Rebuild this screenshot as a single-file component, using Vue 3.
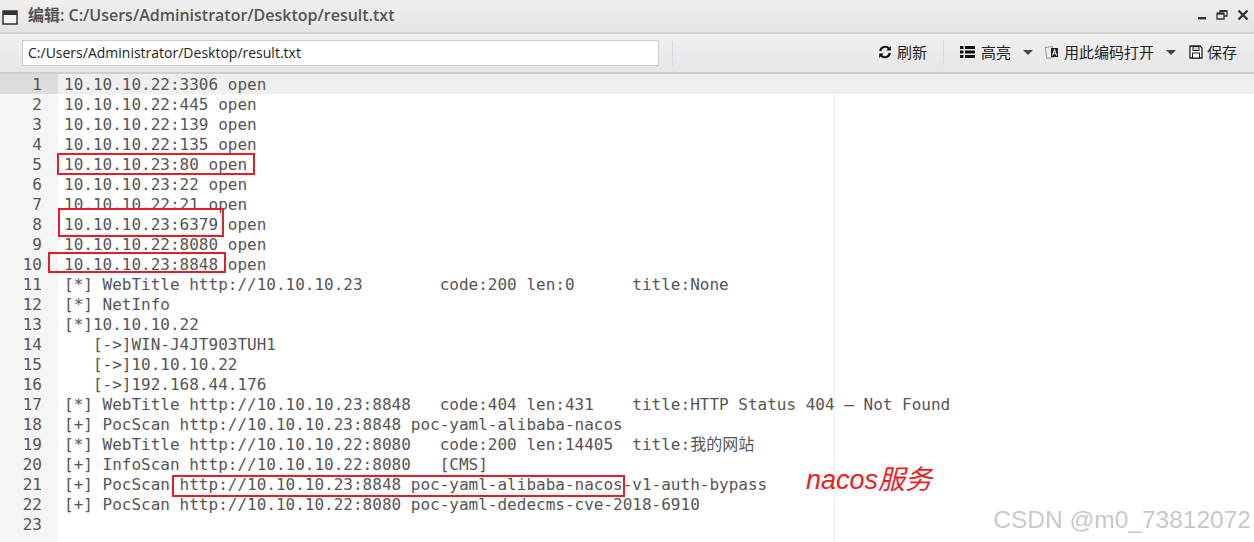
<script setup>
const lines = [
  '10.10.10.22:3306 open','10.10.10.22:445 open','10.10.10.22:139 open','10.10.10.22:135 open',
  '10.10.10.23:80 open','10.10.10.23:22 open','10.10.10.22:21 open','10.10.10.23:6379 open',
  '10.10.10.22:8080 open','10.10.10.23:8848 open',
  '[*] WebTitle http://10.10.10.23        code:200 len:0      title:None',
  '[*] NetInfo','[*]10.10.10.22','   [->]WIN-J4JT903TUH1','   [->]10.10.10.22','   [->]192.168.44.176',
  '[*] WebTitle http://10.10.10.23:8848   code:404 len:431    title:HTTP Status 404 – Not Found',
  '[+] PocScan http://10.10.10.23:8848 poc-yaml-alibaba-nacos',
  '[*] WebTitle http://10.10.10.22:8080   code:200 len:14405  title:我的网站',
  '[+] InfoScan http://10.10.10.22:8080   [CMS]',
  '[+] PocScan http://10.10.10.23:8848 poc-yaml-alibaba-nacos-v1-auth-bypass',
  '[+] PocScan http://10.10.10.22:8080 poc-yaml-dedecms-cve-2018-6910',
  ''
]
const boxes = [
  { left: 57, top: 153, width: 198, height: 22 },
  { left: 58, top: 208, width: 166, height: 29 },
  { left: 48, top: 252, width: 178, height: 21 },
  { left: 172, top: 475, width: 453, height: 22 }
]
const boxStyle = b => ({ left: b.left + 'px', top: b.top + 'px', width: b.width + 'px', height: b.height + 'px' })
</script>

<template>
  <div class="win">
    <header class="titlebar">
      <svg class="winicon" width="16" height="15" viewBox="0 0 16 15"><rect x="1" y="1" width="14" height="13" fill="#f4f4f4" stroke="#333" stroke-width="1.500"/><rect x="1" y="1" width="14" height="4" fill="#333"/></svg>
      <span class="title">编辑: C:/Users/Administrator/Desktop/result.txt</span>
      <div class="winbtns">
        <svg width="10" height="12" viewBox="0 0 10 12"><rect x="1" y="8" width="8" height="2.400" fill="#333"/></svg>
        <svg width="12" height="10" viewBox="0 0 12 10"><path d="M4 3V1h7v5H8.500M1 3.500h7v5.500H1z" fill="none" stroke="#333" stroke-width="1.300"/><path d="M1 3.500h7M4 1h7" stroke="#333" stroke-width="2"/></svg>
        <svg width="12" height="12" viewBox="0 0 12 12"><path d="M1.500 1.500l9 9M10.500 1.500l-9 9" stroke="#333" stroke-width="2.400"/></svg>
      </div>
    </header>
    <div class="toolbar">
      <div class="path">C:/Users/Administrator/Desktop/result.txt</div>
      <div class="vsep first"></div>
      <div class="tools">
        <span class="tool refresh">
          <svg width="14" height="14" viewBox="0 0 14 14"><path d="M2.200 6A5 5 0 0 1 11 3.600M11.800 8A5 5 0 0 1 3 10.400" fill="none" stroke="#111" stroke-width="2.200"/><path d="M12.800 1v4.500H8.300zM1.200 13V8.500h4.500z" fill="#111"/></svg>
          <span class="lbl">刷新</span>
        </span>
        <div class="vsep"></div>
        <span class="tool hl">
          <svg width="15" height="12" viewBox="0 0 15 12"><path d="M0 0h3.500v3H0zM5 0h10v3H5zM0 4.500h3.500v3H0zM5 4.500h10v3H5zM0 9h3.500v3H0zM5 9h10v3H5z" fill="#111"/></svg>
          <span class="lbl">高亮</span>
          <i class="caret"></i>
        </span>
        <span class="tool enc">
          <svg width="14" height="15" viewBox="0 0 14 15"><rect x="1" y="2" width="7" height="11" fill="#eee" stroke="#999" transform="rotate(-8 4 7)"/><rect x="6" y="3" width="7" height="9" fill="#223"/><path d="M7.500 10.500l2-6 2 6M8.300 8.500h2.400" stroke="#fff" fill="none"/></svg>
          <span class="lbl">用此编码打开</span>
          <i class="caret"></i>
        </span>
        <span class="tool save">
          <svg width="14" height="14" viewBox="0 0 14 14"><path d="M1 1h10l2 2v10H1z" fill="#fff" stroke="#222" stroke-width="1.300"/><rect x="4" y="1.500" width="6" height="4" fill="#ccd" stroke="#222"/><rect x="3.500" y="8" width="7" height="5" fill="#fff" stroke="#222"/></svg>
          <span class="lbl">保存</span>
        </span>
      </div>
    </div>
    <main class="editor">
      <div class="margin"></div>
      <div v-for="(l, i) in lines" :key="i" class="row" :class="{ active: i === 0 }">
        <span class="num">{{ i + 1 }}</span>
        <span class="code">{{ l }}</span>
      </div>
    </main>
    <div v-for="(b, i) in boxes" :key="'b' + i" class="redbox" :style="boxStyle(b)"></div>
    <div class="note">nacos服务</div>
    <div class="wm">CSDN @m0_73812072</div>
  </div>
</template>

<style scoped>
.win { position: relative; width: 1254px; height: 542px; overflow: hidden; background: #fff; font-family: "Liberation Sans", "Noto Sans CJK SC", sans-serif; }
.titlebar { height: 32px; display: flex; align-items: center; background: linear-gradient(#efefef, #e4e4e4); border-bottom: 2px solid #d2d2d2; }
.winicon { margin: 2px 10px 0 2px; flex: none; }
.title { font-family: "Open Sans", "Noto Sans CJK SC", sans-serif; font-size: 16px; font-weight: 600; color: #555; margin-bottom: 4px; }
.winbtns { margin-left: auto; display: flex; align-items: center; gap: 9px; padding-right: 5px; margin-bottom: 2px; }
.toolbar { height: 38px; display: flex; align-items: center; background: linear-gradient(#f0f0f0, #e6e6e6); border-bottom: 2px solid #cfcfcf; padding-left: 22px; }
.path { width: 630px; height: 24px; line-height: 24px; padding-left: 5px; background: #fff; border: 1px solid #ccc; font-family: "Open Sans", sans-serif; font-size: 14px; color: #222; white-space: nowrap; }
.vsep { width: 1px; height: 25px; background: #cfdde4; }
.vsep.first { margin-left: 13px; }
.tools { margin-left: auto; display: flex; align-items: center; font-family: "Noto Sans CJK SC", sans-serif; font-size: 15px; color: #222; padding-right: 17px; padding-bottom: 2px; }
.tool { display: inline-flex; align-items: center; }
.lbl { padding-bottom: 2px; }
.refresh { gap: 5px; margin-right: 16px; }
.hl { margin-left: 16px; gap: 6px; }
.hl .caret { margin-left: 6px; }
.enc { margin-left: 12px; gap: 5px; }
.enc .caret { margin-left: 7px; }
.save { margin-left: 13px; gap: 4px; }
.caret { width: 0; height: 0; border: 5px solid transparent; border-top: 5px solid #444; border-bottom: 0; }
.editor { position: relative; background: linear-gradient(to right, #f5f5f5 58px, #fff 58px); height: 468px; }
.margin { position: absolute; left: 834px; top: 0; bottom: 0; width: 1px; background: #f0f0f0; }
.row { position: relative; display: flex; height: 20px; line-height: 22px; font-family: "DejaVu Sans Mono", "Noto Sans CJK SC", monospace; font-size: 16px; color: #555; }
.row.active { background: #efefef; }
.num { width: 42px; text-align: right; flex: none; }
.row.active .num { background: #dcdcdc; width: 58px; padding-right: 16px; box-sizing: border-box; }
.code { margin-left: 22px; white-space: pre; }
.row.active .code { margin-left: 6px; }
.redbox { position: absolute; box-sizing: border-box; border: 2px solid #e51c2a; }
.note { position: absolute; left: 806px; top: 462px; font-family: "Liberation Sans", "Noto Sans CJK SC", sans-serif; font-style: italic; font-size: 27px; line-height: 36px; color: #ee1c25; }
.wm { position: absolute; right: 3px; top: 505px; font-family: "Liberation Sans", sans-serif; font-size: 24.500px; line-height: 30px; color: rgba(120,120,120,.42); white-space: nowrap; }
</style>
